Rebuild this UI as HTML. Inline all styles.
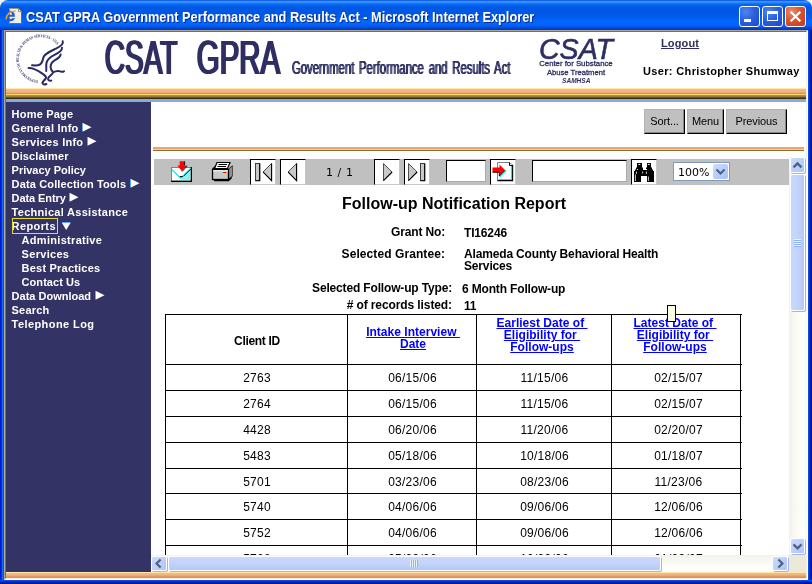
<!DOCTYPE html>
<html lang="en">
<head>
<meta charset="utf-8">
<title>CSAT GPRA Government Performance and Results Act - Microsoft Internet Explorer</title>
<style>
*{box-sizing:border-box;margin:0;padding:0}
html,body{width:812px;height:584px;overflow:hidden;background:#fff}
body{font-family:"Liberation Sans",sans-serif;position:relative}
.abs{position:absolute}
#win{will-change:transform;position:absolute;left:0;top:0;width:812px;height:584px;overflow:hidden;background:#f5f4ef}
/* title bar */
#tbar{position:absolute;left:0;top:0;width:812px;height:30px;border-radius:8px 8px 0 0;
background:linear-gradient(to bottom,#0046d8 0%,#3a93ff 5%,#2e8cff 8%,#0f72f8 12%,#0464ec 17%,#0058e6 25%,#0057e4 45%,#015df0 60%,#0266fe 72%,#0264fa 84%,#0250e0 91%,#0140cc 96%,#0033c0 100%)}
#tcorner-l,#tcorner-r{position:absolute;top:0;width:8px;height:8px;background:#fff}
#ttext{position:absolute;left:26px;top:8.6px;font-weight:bold;font-size:14px;line-height:16px;color:#fff;white-space:nowrap;transform:scaleX(.912);transform-origin:0 0;text-shadow:1px 1px 0 #0a2c8c}
.tbtn{position:absolute;top:6px;width:21px;height:21px;border:1px solid #fff;border-radius:3px;background:radial-gradient(circle at 30% 25%,#4f86f0 0%,#2a60e0 45%,#1c49c8 100%)}
#bclose{background:radial-gradient(circle at 30% 25%,#ee8a6c 0%,#d9502c 50%,#c23a18 100%)}
/* frame borders */
#lb{position:absolute;left:0;top:30px;width:4px;height:554px;background:linear-gradient(to right,#0019cf 0,#0019cf 1px,#0831d9 1px,#0831d9 2px,#166aee 2px,#166aee 3px,#0855dd 3px)}
#rb{position:absolute;left:808px;top:30px;width:4px;height:554px;background:linear-gradient(to right,#0a4ae8 0,#0a4ae8 1px,#0034d6 1px,#0034d6 2px,#0020ac 2px,#0020ac 3px,#00148c 3px)}
#bb{position:absolute;left:0;top:580px;width:812px;height:4px;background:linear-gradient(to bottom,#0a4ae8 0,#0a4ae8 1px,#0034d6 1px,#0034d6 2px,#0020ac 2px,#0020ac 3px,#00148c 3px)}
#client{position:absolute;left:4px;top:30px;width:804px;height:550px;background:#fff;border-top:1px solid #aca899;border-left:1px solid #aca899;border-right:1px solid #fff;border-bottom:1px solid #fff}
#client2{position:absolute;left:0;top:0;width:802px;height:548px;border-top:1px solid #716f64;border-left:1px solid #716f64;border-right:1px solid #f1efe2;border-bottom:1px solid #f1efe2;background:#fff}
/* header */
.navy{color:#2e2e62}
#logout{position:absolute;left:661px;top:37px;font-size:11px;font-weight:bold;color:#2e2e62;text-decoration:underline;letter-spacing:.15px}
#user{position:absolute;left:643px;top:65px;font-size:11px;font-weight:bold;color:#000;white-space:nowrap;letter-spacing:.35px}
.band1{position:absolute;height:14px;background:linear-gradient(to bottom,#fde9a8 0,#fde9a8 1px,#f2b88e 1px,#f0b388 4px,#ec9a62 5px,#e8864a 6px,#f7d468 6px,#f7d468 7px,#b89c4c 7px,#8c7436 9px,#4a3818 10px,#2e220c 11px,#8aabda 11px,#8aabda 14px)}
/* sidebar */
#side{position:absolute;left:6px;top:102px;width:145px;height:470px;background:#333366}
#side div{position:absolute;left:5.6px;color:#fff;font-weight:bold;font-size:11px;line-height:14px;white-space:nowrap;letter-spacing:.28px}
#side div.sub{left:15.6px}
#side svg{position:absolute}
/* buttons */
.btn{position:absolute;top:109px;height:25px;background:#c0c0c0;border:1px solid;border-color:#b2b2b2 #000 #000 #b2b2b2;box-shadow:inset -1px -1px 0 #8a8a8a;font-size:11px;color:#000;text-align:center;line-height:23px;letter-spacing:-.1px}
.band2{position:absolute;left:153px;top:147px;width:651px;height:4px;background:linear-gradient(to bottom,#f0a474 0,#f0a070 2px,#f8d66a 2px,#f8d66a 3px,#8c7030 3px,#8c7030 4px)}
/* toolbar */
#tool{position:absolute;left:154px;top:159px;width:635px;height:26px;background:#c0c0c0}
.tb{position:absolute;top:0;width:26px;height:26px;background:#fff;border-top:1px solid #000;border-left:1px solid #000;border-right:1px solid #c8c8c8;border-bottom:1px solid #c8c8c8}
.inp{position:absolute;top:1px;height:22px;background:#fff;border:1px solid;border-color:#000 #aaa #aaa #000}
/* report */
#rep{position:absolute;left:152px;top:185px;width:637px;height:370px;overflow:hidden;background:#fff}
#rep .t{position:absolute;white-space:nowrap;color:#000}
.lbl{font-weight:bold;font-size:12px;line-height:12px;text-align:right;letter-spacing:-.16px}
.val{font-weight:bold;font-size:12px;line-height:12px;letter-spacing:-.16px}
.hl{position:absolute;background:#000;height:1px;left:13px;width:577px}
.vl{position:absolute;background:#000;width:1px;top:129px;height:245px}
.cell{position:absolute;font-size:12px;line-height:12px;text-align:center;color:#000;letter-spacing:.25px}
.hd{position:absolute;font-size:12px;line-height:12px;font-weight:bold;text-align:center;color:#00f;text-decoration:underline;white-space:pre;letter-spacing:.02px}
/* scrollbars */
.sbtn{position:absolute;border:1px solid #fff;border-radius:2px;background:linear-gradient(135deg,#cddcfb 0%,#bdd0f9 50%,#adc4f6 100%);box-shadow:1px 1px 0 0 #9db5e6}
</style>
</head>
<body>
<div id="win">
  <div id="tbar"></div>
  <div id="lb"></div><div id="rb"></div><div id="bb"></div>
  <div id="ttext">CSAT GPRA Government Performance and Results Act - Microsoft Internet Explorer</div>
  <div class="tbtn" style="left:739px"><div class="abs" style="left:4px;top:12px;width:7px;height:3px;background:#fff"></div></div>
  <div class="tbtn" style="left:762px"><div class="abs" style="left:4px;top:4px;width:11px;height:10px;border:1px solid #fff;border-top-width:3px"></div></div>
  <div class="tbtn" id="bclose" style="left:785px"><svg class="abs" style="left:0;top:0" width="19" height="19" viewBox="0 0 19 19"><path d="M4.7 4.7 L14.3 14.3 M14.3 4.7 L4.7 14.3" stroke="#fff" stroke-width="2.2" fill="none"/></svg></div>
  <svg class="abs" style="left:4px;top:6px" width="20" height="20" viewBox="4 6 20 20">
    <path d="M9.5 8.5 H18.5 L21.5 11.5 V23.5 H9.5 Z" fill="#f1efe4" stroke="#9a9684" stroke-width="1"/>
    <path d="M9.5 23.5 H21.5 V11.5" fill="none" stroke="#6e6a58" stroke-width="1"/>
    <path d="M18.5 8.5 V11.5 H21.5 Z" fill="#fff" stroke="#6e6a58" stroke-width=".7"/>
    <text x="5.6" y="20.6" font-family="Liberation Sans,sans-serif" font-weight="bold" font-size="17.5" fill="#2258dc" stroke="#2258dc" stroke-width=".4">e</text>
    <path d="M6 19.4 C6 15 10.5 10.2 15.8 11.2" fill="none" stroke="#e8a828" stroke-width="1.3"/>
  </svg>
  <div id="client"><div id="client2"></div></div>

  <!-- header -->
  <svg class="abs" style="left:12px;top:32px" width="60" height="56" viewBox="12 32 60 56">
    <defs><path id="hhsarc" d="M37.96 80.44 A21.7 21.7 0 1 1 57.93 45.84"/></defs>
    <text font-family="Liberation Serif,serif" font-weight="bold" font-size="4.1" fill="#34346a" textLength="84" lengthAdjust="spacingAndGlyphs"><textPath href="#hhsarc">DEPARTMENT OF HEALTH &amp; HUMAN SERVICES · USA</textPath></text>
    <g fill="none" stroke="#2b2b62" stroke-linecap="round" stroke-linejoin="round">
      <path d="M62.7 41.2 C63.8 44 61.5 46 56 48.6 C50.5 51.2 45.5 53.2 43.8 56.5 C42.4 59.5 43 63 39.5 64.8 C37 65.8 34 65.4 32 65.2" stroke-width="2"/>
      <path d="M62 47.8 C62.3 50.6 58.5 52.8 54.5 54.8 C50.5 56.8 47.6 59.2 46.6 62.4 C45.8 65.4 46.6 68.2 46.2 71" stroke-width="2"/>
      <path d="M60.7 54.4 C60.6 57 57.8 58.6 55 60.2 C52.2 61.8 50.6 64.4 50.6 67 C50.6 69.2 51.6 70.8 53 72.2" stroke-width="2"/>
      <path d="M28.6 68 C33 67.8 38 70.6 42.4 73.6 C45.4 75.6 47 77 45.4 79 C44 80.7 42.3 81.6 42.6 83.2 C43 84.6 45 84.7 46.4 84" stroke-width="2.1"/>
      <path d="M52.4 73.6 C51 75.2 49 76.2 48.2 78.2 C47.6 80 49.2 81.3 51.2 80.6" stroke-width="2"/>
      <path d="M53 72.3 C55.5 71 58 70.4 60.4 71.4 C61.8 72 63 72 64 71.2" stroke-width="2"/>
    </g>
  </svg>
  <svg class="abs" style="left:100px;top:34px" width="420" height="52" viewBox="100 34 420 52">
    <defs>
      <filter id="fx1" x="-2%" y="-5%" width="104%" height="110%"><feOffset dx="1" result="a"/><feOffset in="SourceGraphic" dx="2" result="b"/><feMerge><feMergeNode in="SourceGraphic"/><feMergeNode in="a"/><feMergeNode in="b"/></feMerge></filter>
      <filter id="fx2" x="-2%" y="-5%" width="104%" height="110%"><feOffset dx=".55" result="a"/><feMerge><feMergeNode in="SourceGraphic"/><feMergeNode in="a"/></feMerge></filter>
    </defs>
    <g font-family="Liberation Sans,sans-serif" fill="#2e2e62">
      <g filter="url(#fx1)">
      <text x="103.8" y="73.6" font-size="47.3" textLength="72.5" lengthAdjust="spacingAndGlyphs">CSAT</text>
      <text x="195.8" y="73.6" font-size="47.3" textLength="83.3" lengthAdjust="spacingAndGlyphs">GPRA</text>
      </g>
      <text x="291.5" y="74.2" font-size="18" word-spacing="2.5" textLength="218.5" lengthAdjust="spacingAndGlyphs" filter="url(#fx2)">Government Performance and Results Act</text>
    </g>
  </svg>
  <svg class="abs" style="left:534px;top:34px" width="86" height="54" viewBox="534 34 86 54">
    <g font-family="Liberation Sans,sans-serif" fill="#2e2e62">
      <text x="539" y="59.2" font-size="29.5" font-style="italic" stroke="#2e2e62" stroke-width=".6" textLength="74" lengthAdjust="spacingAndGlyphs">CSAT</text>
      <text x="539.2" y="65.8" font-size="7.6" stroke="#2e2e62" stroke-width=".3" textLength="73.5" lengthAdjust="spacingAndGlyphs">Center for Substance</text>
      <text x="547" y="75.4" font-size="7.6" stroke="#2e2e62" stroke-width=".3" textLength="58" lengthAdjust="spacingAndGlyphs">Abuse Treatment</text>
      <text x="562" y="83.4" font-size="6.6" font-style="italic" font-weight="bold" textLength="28.5" lengthAdjust="spacingAndGlyphs">SAMHSA</text>
    </g>
  </svg>
  <div id="logout">Logout</div>
  <div id="user">User: Christopher Shumway</div>
  <div class="band1" style="left:6px;top:88px;width:800px"></div>

  <!-- sidebar -->
  <div id="side">
    <div style="top:5px;letter-spacing:0.2px">Home Page</div>
    <div style="top:19px;letter-spacing:0.23px">General Info</div>
    <div style="top:33px;letter-spacing:0.25px">Services Info</div>
    <div style="top:47px;letter-spacing:0.13px">Disclaimer</div>
    <div style="top:61px;letter-spacing:-0.02px">Privacy Policy</div>
    <div style="top:75px;letter-spacing:0.14px">Data Collection Tools</div>
    <div style="top:89px;letter-spacing:-0.08px">Data Entry</div>
    <div style="top:103px;letter-spacing:0.29px">Technical Assistance</div>
    <div style="top:117px;letter-spacing:0.4px">Reports</div>
    <div class="sub" style="top:131px;letter-spacing:0.3px">Administrative</div>
    <div class="sub" style="top:145px;letter-spacing:0.3px">Services</div>
    <div class="sub" style="top:159px;letter-spacing:0.21px">Best Practices</div>
    <div class="sub" style="top:173px;letter-spacing:0.05px">Contact Us</div>
    <div style="top:187px;letter-spacing:0px">Data Download</div>
    <div style="top:201px;letter-spacing:0.17px">Search</div>
    <div style="top:215px;letter-spacing:0.42px">Telephone Log</div>
    <svg style="left:76px;top:21px" width="10" height="9" viewBox="0 0 10 9"><path d="M0.5 0 V8.5" stroke="#58a8f8" stroke-width="1"/><path d="M1 0 L9.5 4.2 L1 8.5 Z" fill="#fff"/></svg><svg style="left:81px;top:35px" width="10" height="9" viewBox="0 0 10 9"><path d="M0.5 0 V8.5" stroke="#58a8f8" stroke-width="1"/><path d="M1 0 L9.5 4.2 L1 8.5 Z" fill="#fff"/></svg><svg style="left:124px;top:77px" width="10" height="9" viewBox="0 0 10 9"><path d="M0.5 0 V8.5" stroke="#58a8f8" stroke-width="1"/><path d="M1 0 L9.5 4.2 L1 8.5 Z" fill="#fff"/></svg><svg style="left:63px;top:91px" width="10" height="9" viewBox="0 0 10 9"><path d="M0.5 0 V8.5" stroke="#58a8f8" stroke-width="1"/><path d="M1 0 L9.5 4.2 L1 8.5 Z" fill="#fff"/></svg><svg style="left:89px;top:189px" width="10" height="9" viewBox="0 0 10 9"><path d="M0.5 0 V8.5" stroke="#58a8f8" stroke-width="1"/><path d="M1 0 L9.5 4.2 L1 8.5 Z" fill="#fff"/></svg><svg style="left:56px;top:120px" width="9" height="8" viewBox="0 0 9 8"><path d="M0 0.5 H8.5" stroke="#58a8f8" stroke-width="1"/><path d="M0 1 H8.5 L4.2 8 Z" fill="#fff"/></svg><span class="abs" style="left:6px;top:116px;width:46px;height:16px;border:1px solid #e6dc28"></span>
  </div>

  <!-- top buttons -->
  <div class="btn" style="left:644px;width:41px">Sort...</div>
  <div class="btn" style="left:687px;width:37px">Menu</div>
  <div class="btn" style="left:726px;width:61px">Previous</div>
  <div class="band2"></div>

  <!-- toolbar -->
  <div id="tool">
    <!-- export icon : page (171..192 , 161..182) => local x-154, y-159 -->
    <svg class="abs" style="left:16px;top:1px" width="24" height="24" viewBox="170 160 24 24">
      <rect x="171.5" y="167.5" width="19.5" height="13.5" fill="#fff" stroke="#808080" stroke-width="1"/>
      <path d="M190.6 170 V180.6 H179.5 Z" fill="#8af2f2"/>
      <path d="M171 181.4 H192 M191.4 167 V182" fill="none" stroke="#000" stroke-width="1.2"/>
      <path d="M172 169.6 L180.6 178.2 L190.6 168.4" fill="none" stroke="#00e6e6" stroke-width="1.2"/>
      <path d="M183.6 176.2 L190.8 169.2" fill="none" stroke="#000" stroke-width=".9"/>
      <path d="M179.8 176.6 H182.8" stroke="#000" stroke-width="1.1"/>
      <path d="M179.7 161.3 H184.3 V165.6 H186.8 L181.9 171.2 L177.5 165.6 H179.7 Z" fill="#f00"/>
      <path d="M184.6 161.3 V165.4 M187.2 165.9 L182.2 171.5" fill="none" stroke="#000" stroke-width=".9"/>
    </svg>
    <!-- printer -->
    <svg class="abs" style="left:56px;top:1px" width="24" height="24" viewBox="210 160 24 24">
      <path d="M217 162.5 H230 L227.5 168.5 H214.5 Z" fill="#fff" stroke="#000" stroke-width="1.2"/>
      <path d="M218.5 164.5 H227 M217.5 166.5 H226" stroke="#000" stroke-width="1"/>
      <path d="M212.5 169.5 L215 166.5 M228.5 169.5 L232 166.5 V176 L228.5 179.5" fill="none" stroke="#000" stroke-width="1.2"/>
      <path d="M228.5 169.5 L232 166.5 V176 L228.5 179.5 Z" fill="#909090"/>
      <rect x="212.5" y="169.5" width="16" height="10" fill="#c8c8c8" stroke="#000" stroke-width="1.3"/>
      <path d="M213 170.8 H228" stroke="#fff" stroke-width="1"/>
      <path d="M214 180.5 H228.5 L231.5 177.5" fill="none" stroke="#000" stroke-width="1.6"/>
      <rect x="223" y="172" width="3.2" height="1.2" fill="#f00"/><rect x="223" y="173.2" width="3.2" height="1.2" fill="#ffe000"/>
    </svg>
    <div class="tb" style="left:96px"><svg class="abs" style="left:0;top:0" width="24" height="24" viewBox="251 160 24 24">
      <rect x="255.5" y="163.5" width="4" height="17" fill="#c8c8c8" stroke="#404040" stroke-width="1"/>
      <path d="M259.8 163.5 V180.8 H255.5" fill="none" stroke="#000" stroke-width="1.1"/>
      <path d="M271.5 163.5 V180.5 L263 172 Z" fill="#c8c8c8" stroke="#404040" stroke-width=".9"/>
      <path d="M271.6 163.5 V180.6 L263.2 172.2" fill="none" stroke="#000" stroke-width="1.1"/>
    </svg></div>
    <div class="tb" style="left:126px"><svg class="abs" style="left:0;top:0" width="24" height="24" viewBox="281 160 24 24">
      <path d="M296.5 163.5 V180.5 L288 172 Z" fill="#c8c8c8" stroke="#404040" stroke-width=".9"/>
      <path d="M296.6 163.5 V180.6 L288.2 172.2" fill="none" stroke="#000" stroke-width="1.1"/>
    </svg></div>
    <div class="abs" style="left:172px;top:7px;font-family:'DejaVu Sans',sans-serif;font-size:11px;line-height:14px;white-space:pre;letter-spacing:.55px">1 / 1</div>
    <div class="tb" style="left:220px"><svg class="abs" style="left:0;top:0" width="24" height="24" viewBox="375 160 24 24">
      <path d="M383.5 163.5 V180.5 L392 172 Z" fill="#c8c8c8" stroke="#404040" stroke-width=".9"/>
      <path d="M383.5 180.6 L392.2 172" fill="none" stroke="#000" stroke-width="1.1"/>
    </svg></div>
    <div class="tb" style="left:250px"><svg class="abs" style="left:0;top:0" width="24" height="24" viewBox="405 160 24 24">
      <path d="M408.5 163.5 V180.5 L417 172 Z" fill="#c8c8c8" stroke="#404040" stroke-width=".9"/>
      <path d="M408.5 180.6 L417.2 172" fill="none" stroke="#000" stroke-width="1.1"/>
      <rect x="420.5" y="163.5" width="4" height="17" fill="#c8c8c8" stroke="#404040" stroke-width="1"/>
      <path d="M424.8 163.5 V180.8 H420.5" fill="none" stroke="#000" stroke-width="1.1"/>
    </svg></div>
    <div class="inp" style="left:292px;width:40px"></div>
    <div class="tb" style="left:336px"><svg class="abs" style="left:0;top:0" width="24" height="24" viewBox="491 160 24 24">
      <path d="M497.5 162.5 H510 L512.5 165 V180.5 H497.5 Z" fill="#fff" stroke="#808080" stroke-width="1"/>
      <path d="M512.6 165 V180.6 H497.5" fill="none" stroke="#000" stroke-width="1.2"/>
      <path d="M511.5 166 V179.5 H498.5" fill="none" stroke="#00f0f0" stroke-width="1.2"/>
      <path d="M509.5 162.5 V165.5 H512.5" fill="none" stroke="#000" stroke-width="1"/>
      <path d="M499.5 177 L506 170.5" stroke="#00f0f0" stroke-width="1.6"/>
      <path d="M492.5 167.5 H499.5 V164.5 L505 170 L499.5 175.8 V172 H492.5 Z" fill="#f00"/>
      <path d="M492.5 172.3 H499.3 V176 L505 170.2" fill="none" stroke="#400000" stroke-width="1"/>
    </svg></div>
    <div class="inp" style="left:378px;width:95px"></div>
    <div class="tb" style="left:477px"><svg class="abs" style="left:0;top:0" width="24" height="24" viewBox="632 160 24 24">
      <path d="M637 163 H642 V167.5 H643 V170 H646 V167.5 H647 V163 H651 V167.5 H652 V169.5 H653 V171 H654 V182 H647 V176 H641 V182 H634 V171 H635 V169.5 H636 V167.5 H637 Z" fill="#000"/>
      <path d="M638.3 164.4 H640.3 M647.8 164.4 H649.8" stroke="#fff" stroke-width="1"/>
      <path d="M637.4 169 V170 M646.6 169 V170" stroke="#fff" stroke-width="1"/>
      <path d="M636.4 171.5 V174 M642.6 171.5 V173.5 M646.4 171.5 V174 M635.4 174.5 V181 M648.4 176.5 V181" stroke="#fff" stroke-width=".8"/>
    </svg></div>
    <div class="abs" style="left:519px;top:3px;width:57px;height:19px;background:#fff;border:1px solid #7f9db9"></div>
    <div class="abs" style="left:524px;top:7px;font-family:'DejaVu Sans',sans-serif;font-size:11px;line-height:14px">100%</div>
    <div class="abs" style="left:559px;top:5px;width:15px;height:15px;border-radius:2px;background:linear-gradient(135deg,#cddcfb 0%,#b9cdf9 50%,#a9c1f5 100%)"><svg class="abs" style="left:1px;top:1px" width="13" height="13" viewBox="0 0 13 13"><path d="M2.5 4.4 L6.5 8.4 L10.5 4.4" fill="none" stroke="#4d6185" stroke-width="2.1"/></svg></div>
  </div>

  <!-- report -->
  <div id="rep">
    <div class="t" style="left:190px;top:10px;font-size:16px;line-height:18px;font-weight:bold">Follow-up Notification Report</div>
    <div class="t lbl" style="left:101px;width:192px;top:41px">Grant No:</div>
    <div class="t val" style="left:312px;top:42px">TI16246</div>
    <div class="t lbl" style="left:101px;width:192px;top:63px;letter-spacing:.08px">Selected Grantee:</div>
    <div class="t val" style="left:312px;top:63px">Alameda County Behavioral Health</div>
    <div class="t val" style="left:312px;top:75px">Services</div>
    <div class="t lbl" style="left:99px;width:201px;top:97px">Selected Follow-up Type:</div>
    <div class="t val" style="left:310px;top:98px">6 Month Follow-up</div>
    <div class="t lbl" style="left:99px;width:201px;top:114px;letter-spacing:-.1px">#&nbsp;of records listed:</div>
    <div class="t val" style="left:312px;top:115px">11</div>
    <div class="hl" style="top:129px"></div>
    <div class="hl" style="top:179px"></div>
    <div class="hl" style="top:205px"></div>
    <div class="hl" style="top:231px"></div>
    <div class="hl" style="top:257px"></div>
    <div class="hl" style="top:283px"></div>
    <div class="hl" style="top:308px"></div>
    <div class="hl" style="top:334px"></div>
    <div class="hl" style="top:360px"></div>
    <div class="vl" style="left:13px"></div>
    <div class="vl" style="left:195px"></div>
    <div class="vl" style="left:324px"></div>
    <div class="vl" style="left:459px"></div>
    <div class="vl" style="left:588px"></div>
    <div class="cell" style="left:14px;width:182px;top:150px;font-weight:bold;letter-spacing:-.3px">Client ID</div>
    <div class="hd" style="left:196px;width:130px;top:141px">Intake Interview 
Date</div>
    <div class="hd" style="left:322px;width:136px;top:132px">Earliest Date of 
Eligibility for 
Follow-ups</div>
    <div class="hd" style="left:458px;width:130px;top:132px">Latest Date of 
Eligibility for 
Follow-ups</div>
    <div class="cell" style="left:14px;width:182px;top:187px">2763</div>
    <div class="cell" style="left:196px;width:129px;top:187px">06/15/06</div>
    <div class="cell" style="left:325px;width:135px;top:187px">11/15/06</div>
    <div class="cell" style="left:462px;width:129px;top:187px">02/15/07</div>
    <div class="cell" style="left:14px;width:182px;top:213px">2764</div>
    <div class="cell" style="left:196px;width:129px;top:213px">06/15/06</div>
    <div class="cell" style="left:325px;width:135px;top:213px">11/15/06</div>
    <div class="cell" style="left:462px;width:129px;top:213px">02/15/07</div>
    <div class="cell" style="left:14px;width:182px;top:239px">4428</div>
    <div class="cell" style="left:196px;width:129px;top:239px">06/20/06</div>
    <div class="cell" style="left:325px;width:135px;top:239px">11/20/06</div>
    <div class="cell" style="left:462px;width:129px;top:239px">02/20/07</div>
    <div class="cell" style="left:14px;width:182px;top:265px">5483</div>
    <div class="cell" style="left:196px;width:129px;top:265px">05/18/06</div>
    <div class="cell" style="left:325px;width:135px;top:265px">10/18/06</div>
    <div class="cell" style="left:462px;width:129px;top:265px">01/18/07</div>
    <div class="cell" style="left:14px;width:182px;top:291px">5701</div>
    <div class="cell" style="left:196px;width:129px;top:291px">03/23/06</div>
    <div class="cell" style="left:325px;width:135px;top:291px">08/23/06</div>
    <div class="cell" style="left:462px;width:129px;top:291px">11/23/06</div>
    <div class="cell" style="left:14px;width:182px;top:316px">5740</div>
    <div class="cell" style="left:196px;width:129px;top:316px">04/06/06</div>
    <div class="cell" style="left:325px;width:135px;top:316px">09/06/06</div>
    <div class="cell" style="left:462px;width:129px;top:316px">12/06/06</div>
    <div class="cell" style="left:14px;width:182px;top:342px">5752</div>
    <div class="cell" style="left:196px;width:129px;top:342px">04/06/06</div>
    <div class="cell" style="left:325px;width:135px;top:342px">09/06/06</div>
    <div class="cell" style="left:462px;width:129px;top:342px">12/06/06</div>
    <div class="cell" style="left:14px;width:182px;top:368px">5768</div>
    <div class="cell" style="left:196px;width:129px;top:368px">05/09/06</div>
    <div class="cell" style="left:325px;width:135px;top:368px">10/09/06</div>
    <div class="cell" style="left:462px;width:129px;top:368px">01/09/07</div>
    <div class="abs" style="left:515px;top:120px;width:9px;height:17px;background:#ffffe1;border:1px solid #000"></div>
  </div>

  <!-- scrollbars -->
  <div class="abs" id="vtrack" style="left:789px;top:157px;width:19px;height:398px;background:linear-gradient(to right,#f3f1ec 0,#f8f7f2 5px,#fdfdfa 12px,#fefefb 16px,#f6f4ea 17px,#fff 18px)"></div>
  <div class="abs" id="htrack" style="left:151px;top:555px;width:638px;height:17px;background:linear-gradient(to bottom,#f3f1ec 0,#f8f7f2 5px,#fdfdfa 12px,#fefefb 17px)"></div>
  <div class="abs" style="left:789px;top:555px;width:17px;height:17px;background:#ece9d8"></div>
  <div class="sbtn" style="left:790px;top:157px;width:15px;height:16px"><svg width="13" height="14" viewBox="0 0 13 14" style="position:absolute;left:0;top:0"><path d="M2.5 9.4 L6.5 5.4 L10.5 9.4" fill="none" stroke="#4d6185" stroke-width="2.2"/></svg></div>
  <div class="sbtn" style="left:790px;top:538px;width:15px;height:16px"><svg width="13" height="14" viewBox="0 0 13 14" style="position:absolute;left:0;top:0"><path d="M2.5 5.4 L6.5 9.4 L10.5 5.4" fill="none" stroke="#4d6185" stroke-width="2.2"/></svg></div>
  <div class="sbtn" style="left:151px;top:556px;width:16px;height:15px"><svg width="14" height="13" viewBox="0 0 14 13" style="position:absolute;left:0;top:0"><path d="M8.6 2.5 L4.6 6.5 L8.6 10.5" fill="none" stroke="#4d6185" stroke-width="2.2"/></svg></div>
  <div class="sbtn" style="left:772px;top:556px;width:16px;height:15px"><svg width="14" height="13" viewBox="0 0 14 13" style="position:absolute;left:0;top:0"><path d="M5.4 2.5 L9.4 6.5 L5.4 10.5" fill="none" stroke="#4d6185" stroke-width="2.2"/></svg></div>
  <div class="sbtn" id="vthumb" style="left:790px;top:174px;width:15px;height:137px;background:linear-gradient(to right,#c9d8fc 0%,#c3d3fb 50%,#b5c9f7 100%)">
    <div class="abs" style="left:3px;top:64px;width:7px;height:8px;background:repeating-linear-gradient(to bottom,#eef4fe 0,#eef4fe 1px,#8cb0f8 1px,#8cb0f8 2px)"></div>
  </div>
  <div class="sbtn" id="hthumb" style="left:168px;top:556px;width:493px;height:15px;background:linear-gradient(to bottom,#c9d8fc 0%,#c3d3fb 50%,#b5c9f7 100%)">
    <div class="abs" style="left:241px;top:3px;width:8px;height:7px;background:repeating-linear-gradient(to right,#eef4fe 0,#eef4fe 1px,#8cb0f8 1px,#8cb0f8 2px)"></div>
  </div>
  <!-- bottom band -->
  <div class="abs" style="left:6px;top:572px;width:800px;height:6px;background:linear-gradient(to bottom,#fde9a8 0,#fde9a8 1px,#f2b88e 1px,#f0b388 3px,#ec9a62 4px,#e8864a 6px)"></div>
</div>
</body>
</html>
